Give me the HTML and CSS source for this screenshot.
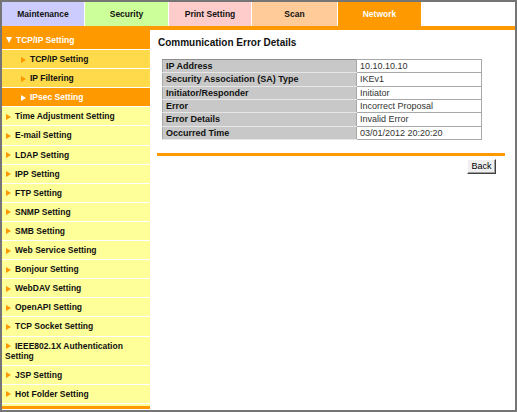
FILE: index.html
```html
<!DOCTYPE html>
<html>
<head>
<meta charset="utf-8">
<link rel="stylesheet" href="styles.css">
</head>
<body>
<div class="frame">
  <div class="tabs">
    <div class="tab t-maint">Maintenance</div>
    <div class="tab t-sec">Security</div>
    <div class="tab t-print">Print Setting</div>
    <div class="tab t-scan">Scan</div>
    <div class="tab t-net">Network</div>
  </div>
  <div class="strip"></div>
  <div class="body">
    <nav class="side">
      <div class="item head"><span class="tri-down"></span>TCP/IP Setting</div>
      <div class="item sub"><span class="tri"></span>TCP/IP Setting</div>
      <div class="item sub"><span class="tri"></span>IP Filtering</div>
      <div class="item sub active"><span class="tri"></span>IPsec Setting</div>
      <div class="item"><span class="tri"></span>Time Adjustment Setting</div>
      <div class="item"><span class="tri"></span>E-mail Setting</div>
      <div class="item"><span class="tri"></span>LDAP Setting</div>
      <div class="item"><span class="tri"></span>IPP Setting</div>
      <div class="item"><span class="tri"></span>FTP Setting</div>
      <div class="item"><span class="tri"></span>SNMP Setting</div>
      <div class="item"><span class="tri"></span>SMB Setting</div>
      <div class="item"><span class="tri"></span>Web Service Setting</div>
      <div class="item"><span class="tri"></span>Bonjour Setting</div>
      <div class="item"><span class="tri"></span>WebDAV Setting</div>
      <div class="item"><span class="tri"></span>OpenAPI Setting</div>
      <div class="item"><span class="tri"></span>TCP Socket Setting</div>
      <div class="item"><span class="tri"></span>IEEE802.1X Authentication Setting</div>
      <div class="item"><span class="tri"></span>JSP Setting</div>
      <div class="item"><span class="tri"></span>Hot Folder Setting</div>
      <div class="side-pad"></div>
      <div class="side-line"></div>
    </nav>
    <main class="main">
      <h1 class="title">Communication Error Details</h1>
      <table class="details">
        <tr><th>IP Address</th><td>10.10.10.10</td></tr>
        <tr><th>Security Association (SA) Type</th><td>IKEv1</td></tr>
        <tr><th>Initiator/Responder</th><td>Initiator</td></tr>
        <tr><th>Error</th><td>Incorrect Proposal</td></tr>
        <tr><th>Error Details</th><td>Invalid Error</td></tr>
        <tr><th>Occurred Time</th><td>03/01/2012 20:20:20</td></tr>
      </table>
      <div class="rule"></div>
      <div class="actions"><button class="btn">Back</button></div>
    </main>
  </div>
</div>
</body>
</html>
```
FILE: styles.css
```css
html, body {
  margin: 0;
  padding: 0;
  background: #fff;
}
.frame {
  width: 517px;
  height: 412px;
  box-sizing: border-box;
  border: 2px solid #757575;
  background: #fff;
  font-family: "Liberation Sans", Arial, sans-serif;
  overflow: hidden;
}
.tabs {
  display: flex;
  gap: 1px;
  height: 24px;
}
.tab {
  height: 24px;
  line-height: 24px;
  text-align: center;
  font-size: 8.5px;
  font-weight: bold;
  color: #111;
}
.t-maint { width: 82px; background: #ccccff; }
.t-sec { width: 83px; background: #ccff99; }
.t-print { width: 82px; background: #ffcccc; }
.t-scan { width: 85px; background: #ffcc99; }
.t-net { width: 83px; background: #ff9900; color: #fff; }
.strip {
  height: 4px;
  background: #ff9900;
}
.body {
  display: flex;
  align-items: flex-start;
}
.side {
  width: 148px;
  flex: none;
}
.item {
  font-size: 8.5px;
  font-weight: bold;
  line-height: 10.1px;
  padding: 4px 0 4px 3px;
  border-bottom: 1px solid #fff;
  background: #ffff99;
  color: #111;
}
.item.sub {
  background: #ffda4a;
  padding-left: 18px;
}
.item.head, .item.active {
  background: #ff9900;
  color: #fff;
}
.item.head {
  padding-top: 4.5px;
  padding-bottom: 4.5px;
}
.tri {
  display: inline-block;
  width: 0;
  height: 0;
  border-top: 3.5px solid transparent;
  border-bottom: 3.5px solid transparent;
  border-left: 5px solid #ff9900;
  margin: 0 4px 0 1px;
  vertical-align: -0.5px;
}
.item.active .tri {
  border-left-color: #fff;
}
.tri-down {
  display: inline-block;
  width: 0;
  height: 0;
  border-left: 3px solid transparent;
  border-right: 3px solid transparent;
  border-top: 6px solid #fff;
  margin: 0 4px 0 1px;
  vertical-align: 0;
}
.side-pad {
  height: 2px;
  background: #ffff99;
}
.side-line {
  height: 3px;
  background: #ff9900;
}
.main {
  flex: 1;
  padding: 7px 10px 0 7px;
}
.title {
  margin: 0 0 10px 1px;
  font-size: 10px;
  line-height: 12px;
  font-weight: bold;
  color: #111;
}
.details {
  margin-left: 5px;
  width: 320px;
  border-collapse: collapse;
  font-size: 9px;
}
.details th, .details td {
  height: 12.33px;
  line-height: 12px;
  padding: 0 0 0 3px;
  text-align: left;
  border: 1px solid #a8a8a8;
}
.details th {
  width: 190px;
  background: #c8c8c8;
  font-weight: bold;
  color: #111;
  border-top-color: #8c8c8c;
  border-bottom-color: #e6e6e6;
}
.details td {
  background: #fff;
  color: #333;
}
.rule {
  margin-top: 13px;
  height: 3px;
  background: #ff9900;
}
.actions {
  display: flex;
  justify-content: flex-end;
  padding: 3px 9px 0 0;
}
.btn {
  width: 29px;
  height: 15px;
  padding: 0;
  font-family: "Liberation Sans", Arial, sans-serif;
  font-size: 9px;
  color: #000;
  background: #efefef;
  border: 1px solid;
  border-color: #fff #404040 #404040 #fff;
  box-shadow: inset -1px -1px 0 #a0a0a0;
}
```
